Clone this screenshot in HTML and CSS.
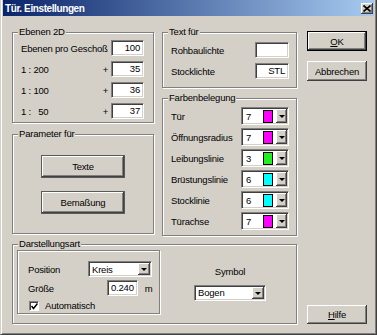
FILE: index.html
```html
<!DOCTYPE html>
<html lang="de">
<head>
    <meta charset="UTF-8">
    <title>Tür. Einstellungen</title>
    <link rel="stylesheet" href="styles.css">
</head>
<body>
    <div class="dialog">
        <div class="titlebar">
            <span class="title">Tür. Einstellungen</span>
            <span class="close">
                <svg width="8" height="7" viewBox="0 0 8 7"><path d="M0.5 0.5L7.5 6.5M7.5 0.5L0.5 6.5" stroke="#000" stroke-width="1.6" fill="none"/></svg>
            </span>
        </div>

        <div class="content">
            <div class="main">
                <div class="top">
                    <div class="col-left">
                        <fieldset class="group ebenen">
                            <legend>Ebenen 2D</legend>
                            <div class="row"><span class="lbl">Ebenen pro Geschoß</span><span class="field">100</span></div>
                            <div class="row"><span class="lbl">1 : 200</span><span class="plus">+</span><span class="field">35</span></div>
                            <div class="row"><span class="lbl">1 : 100</span><span class="plus">+</span><span class="field">36</span></div>
                            <div class="row"><span class="lbl">1 :&nbsp;&nbsp; 50</span><span class="plus">+</span><span class="field">37</span></div>
                        </fieldset>

                        <fieldset class="group params">
                            <legend>Parameter für</legend>
                            <button class="btn framed">Texte</button>
                            <button class="btn framed">Bemaßung</button>
                        </fieldset>
                    </div>

                    <div class="col-mid">
                        <fieldset class="group textfuer">
                            <legend>Text für</legend>
                            <div class="row"><span class="lbl">Rohbaulichte</span><span class="field wide"></span></div>
                            <div class="row"><span class="lbl">Stocklichte</span><span class="field wide">STL</span></div>
                        </fieldset>

                        <fieldset class="group farben">
                            <legend>Farbenbelegung</legend>
                            <div class="crow"><span class="lbl">Tür</span><span class="colorsel"><span class="num">7</span><span class="swatch magenta"></span><span class="drop"></span></span></div>
                            <div class="crow"><span class="lbl">Öffnungsradius</span><span class="colorsel"><span class="num">7</span><span class="swatch magenta"></span><span class="drop"></span></span></div>
                            <div class="crow"><span class="lbl">Leibungslinie</span><span class="colorsel"><span class="num">3</span><span class="swatch green"></span><span class="drop"></span></span></div>
                            <div class="crow"><span class="lbl">Brüstungslinie</span><span class="colorsel"><span class="num">6</span><span class="swatch cyan"></span><span class="drop"></span></span></div>
                            <div class="crow"><span class="lbl">Stocklinie</span><span class="colorsel"><span class="num">6</span><span class="swatch cyan"></span><span class="drop"></span></span></div>
                            <div class="crow"><span class="lbl">Türachse</span><span class="colorsel"><span class="num">7</span><span class="swatch magenta"></span><span class="drop"></span></span></div>
                        </fieldset>
                    </div>
                </div>

                <fieldset class="group darstellung">
                    <legend>Darstellungsart</legend>
                    <div class="dar-body">
                        <div class="inner">
                            <div class="row"><span class="lbl">Position</span><span class="select pos"><span class="val">Kreis</span><span class="drop"></span></span></div>
                            <div class="row size"><span class="lbl">Größe</span><span class="field">0.240</span><span class="unit">m</span></div>
                            <div class="check-row"><span class="check"><svg width="7" height="7" viewBox="0 0 7 7"><path d="M0.5 3L2.5 5.5L6.5 0.5" stroke="#000" stroke-width="1.5" fill="none"/></svg></span><span>Automatisch</span></div>
                        </div>
                        <div class="symbol">
                            <span>Symbol</span>
                            <span class="select sym"><span class="val">Bogen</span><span class="drop"></span></span>
                        </div>
                    </div>
                </fieldset>
            </div>

            <div class="side">
                <button class="btn default"><u>O</u>K</button>
                <button class="btn cancel">Abbrechen</button>
                <button class="btn help"><u>H</u>ilfe</button>
            </div>
        </div>
    </div>
</body>
</html>
```

FILE: styles.css
```css
* {
    box-sizing: border-box;
}

body {
    margin: 0;
    font-family: "Liberation Sans", Arial, sans-serif;
    font-size: 9.5px;
    letter-spacing: -0.2px;
    color: #000;
    background: #d4d0c8;
}

.dialog {
    width: 377px;
    height: 335px;
    background: #d4d0c8;
    border-left: 1px solid #d4d0c8;
    border-right: 1px solid #404040;
    border-bottom: 1px solid #404040;
    box-shadow: inset 1px 0 #fff, inset -1px -1px #808080;
    padding: 0 2px 2px 2px;
    display: flex;
    flex-direction: column;
}

.titlebar {
    height: 16px;
    flex: none;
    display: flex;
    align-items: center;
    justify-content: space-between;
    padding: 0 1px 0 2px;
    background: linear-gradient(to right, #0a246a, #a6caf0);
    color: #fff;
}

.title {
    font-weight: bold;
    font-size: 10px;
    letter-spacing: -0.4px;
}

.close {
    width: 12px;
    height: 11px;
    display: flex;
    align-items: center;
    justify-content: center;
    background: #d4d0c8;
    box-shadow: inset -1px -1px #404040, inset 1px 1px #fff, inset -2px -2px #808080;
}

.content {
    flex: 1;
    display: flex;
    padding: 10px 7px 8px 9px;
}

.main {
    width: 285px;
    display: flex;
    flex-direction: column;
}

.top {
    display: flex;
    gap: 8px;
    height: 210px;
}

.col-left {
    width: 142px;
    display: flex;
    flex-direction: column;
    gap: 5px;
}

.col-mid {
    width: 135px;
    display: flex;
    flex-direction: column;
    gap: 4px;
}

/* group boxes */
.group {
    margin: 0;
    border: 1px solid #808080;
    box-shadow: inset 1px 1px #fff, 1px 1px #fff;
    min-width: 0;
}

.group legend {
    padding: 0 1px;
    margin-left: -3px;
    line-height: 12px;
    background: #d4d0c8;
}

.ebenen {
    padding: 2px 9px 3px 8px;
    display: flex;
    flex-direction: column;
    gap: 5px;
}

.params {
    padding: 15px 8px 19px;
    display: flex;
    flex-direction: column;
    align-items: center;
    gap: 13px;
}

.textfuer {
    padding: 4px 7px 8px 8px;
    display: flex;
    flex-direction: column;
    gap: 5px;
}

.farben {
    padding: 3px 7px 5px 8px;
    display: flex;
    flex-direction: column;
    gap: 3px;
}

.darstellung {
    margin-top: 2px;
    padding: 0 8px 9px 4px;
}

.darstellung legend {
    margin-left: 1px;
}

.row {
    display: flex;
    align-items: center;
    height: 16px;
}

.crow {
    display: flex;
    align-items: center;
    height: 18px;
}

.lbl {
    flex: 1;
    white-space: nowrap;
}

.plus {
    margin-right: 3px;
}

/* sunken edit fields */
.field {
    width: 33px;
    height: 16px;
    background: #fff;
    border: 1px solid;
    border-color: #808080 #fff #fff #808080;
    box-shadow: inset 1px 1px #404040, inset -1px -1px #d4d0c8;
    text-align: right;
    padding: 0 3px;
    line-height: 14px;
}

.field.wide {
    width: 34px;
}

/* colour combo boxes */
.colorsel {
    width: 48px;
    height: 18px;
    display: flex;
    align-items: center;
    background: #fff;
    border: 1px solid;
    border-color: #808080 #fff #fff #808080;
    box-shadow: inset 1px 1px #404040, inset -1px -1px #d4d0c8;
    padding: 1px;
}

.num {
    width: 20px;
    padding-left: 3px;
}

.swatch {
    width: 10px;
    height: 13px;
    border: 1px solid #000;
    margin-right: 3px;
}

.magenta {
    background: #ff00ff;
}

.green {
    background: #22ee22;
}

.cyan {
    background: #00ffff;
}

.drop {
    width: 11px;
    height: 14px;
    background: #d4d0c8;
    box-shadow: inset -1px -1px #404040, inset 1px 1px #fff, inset -2px -2px #808080;
    display: flex;
    align-items: center;
    justify-content: center;
}

.drop::before {
    content: '';
    display: block;
    width: 0;
    height: 0;
    border-left: 3px solid transparent;
    border-right: 3px solid transparent;
    border-top: 3px solid #000;
}

/* selects */
.select {
    height: 16px;
    display: flex;
    align-items: center;
    background: #fff;
    border: 1px solid;
    border-color: #808080 #fff #fff #808080;
    box-shadow: inset 1px 1px #404040, inset -1px -1px #d4d0c8;
    padding: 1px;
}

.select .val {
    flex: 1;
    padding-left: 2px;
}

.select .drop {
    width: 12px;
    height: 12px;
}

.select.pos {
    width: 64px;
}

.select.sym {
    width: 72px;
    margin-top: 7px;
}

/* Darstellungsart */
.dar-body {
    display: flex;
}

.inner {
    width: 143px;
    height: 64px;
    border: 1px solid #808080;
    box-shadow: inset 1px 1px #fff, 1px 1px #fff;
    padding: 10px 7px 0 10px;
}

.row.size {
    margin-top: 3px;
}

.row.size .lbl {
    flex: none;
    width: 79px;
}

.unit {
    margin-left: 7px;
}

.check-row {
    display: flex;
    align-items: center;
    gap: 6px;
    margin-top: 4px;
    height: 11px;
}

.check {
    width: 10px;
    height: 10px;
    margin-left: 1px;
    background: #fff;
    border: 1px solid;
    border-color: #808080 #fff #fff #808080;
    box-shadow: inset 1px 1px #404040;
    display: flex;
    align-items: center;
    justify-content: center;
    padding: 1px 0 0 1px;
}

.symbol {
    flex: 1;
    display: flex;
    flex-direction: column;
    align-items: center;
    padding: 16px 0 0 12px;
    line-height: 12px;
}

/* push buttons */
.btn {
    font: inherit;
    letter-spacing: inherit;
    color: #000;
    width: 60px;
    height: 20px;
    padding: 0;
    background: #d4d0c8;
    border: none;
    box-shadow: inset -1px -1px #404040, inset 1px 1px #fff, inset -2px -2px #808080;
}

.btn.framed {
    width: 84px;
    height: 23px;
    border: 1px solid #5a5a5a;
}

.btn.default {
    margin-top: 5px;
    border: 1px solid #000;
}

.btn.cancel {
    margin-top: 10px;
}

.btn.help {
    margin-top: auto;
    height: 19px;
}

.side {
    width: 60px;
    margin-left: 10px;
    display: flex;
    flex-direction: column;
}
```
